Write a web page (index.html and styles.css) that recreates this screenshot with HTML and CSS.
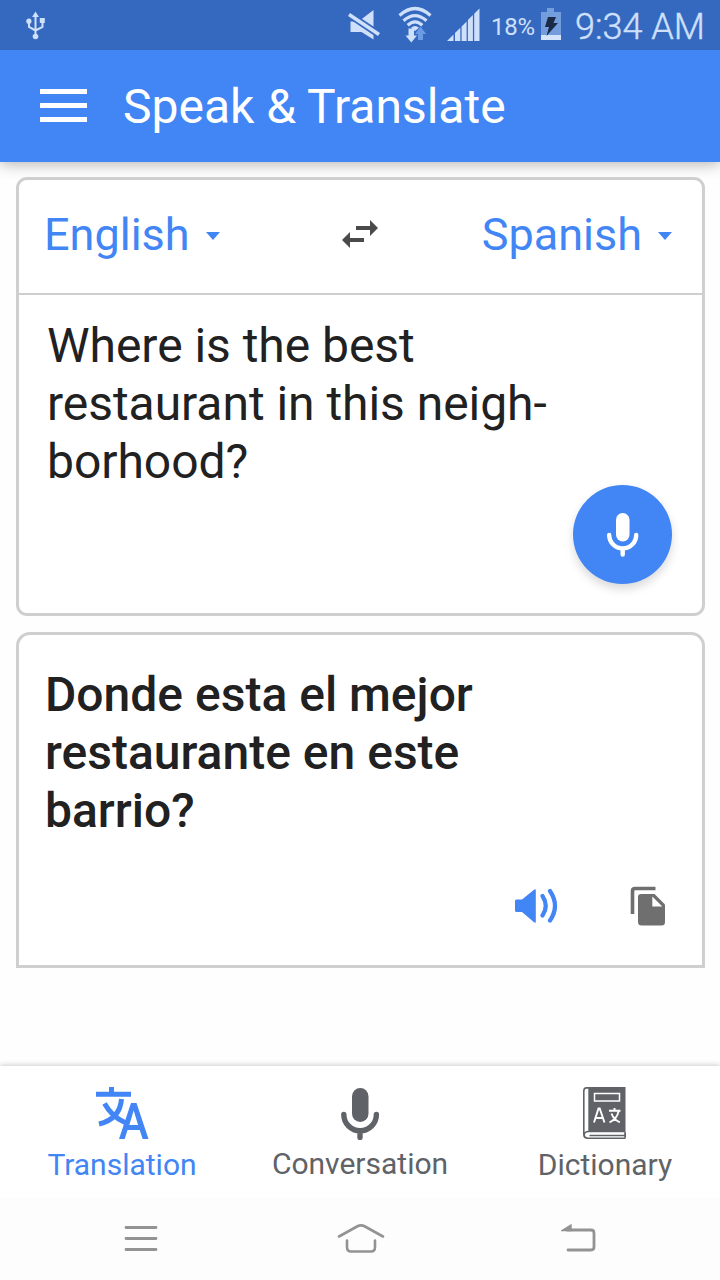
FILE: index.html
```html
<!DOCTYPE html>
<html lang="en">
<head>
  <meta charset="UTF-8" />
  <meta name="viewport" content="width=device-width, initial-scale=1.0"/>
  <title>Speak &amp; Translate</title>
  <link rel="stylesheet" href="styles.css">
</head>
<body>

  <!-- STATUS BAR -->
  <div class="status">
    <svg class="usb" width="20" height="30" viewBox="0 0 20 30" fill="none" stroke="currentColor" stroke-width="2">
      <path d="M9.500 4v21M3 11v5L9.500 19.500M16.500 10v6L9.500 19.500"/>
      <path d="M9.500 0.500l3.400 5.500h-6.800zM13.800 7h5v5h-5z" fill="currentColor" stroke="none"/>
      <circle cx="2.900" cy="10.200" r="2.600" fill="currentColor" stroke="none"/>
      <circle cx="9.500" cy="25.500" r="2.800" fill="currentColor" stroke="none"/>
    </svg>
    <svg class="mute" width="34" height="32" viewBox="0 0 34 32">
      <path d="M2.500 12.500h8L25.500 1v29.500l-12-7.500h-11z" fill="currentColor"/>
      <path d="M1 5.500l30 20" stroke="#3569c0" stroke-width="7"/>
      <path d="M1 5.500l30 20" stroke="currentColor" stroke-width="3.600"/>
    </svg>
    <svg class="wifi" width="34" height="38" viewBox="0 0 34 38" fill="none" stroke="currentColor" stroke-width="3.200">
      <path d="M1.500 9.500Q17-4.500 32.500 9.500M5.500 14.700Q17 4.500 28.500 14.700M9.700 19.200Q17 12.500 24.300 19.200"/>
      <path d="M13 21.800Q17 18 21 21.800L17 25z" fill="currentColor" stroke="none"/>
      <path d="M10.500 22.500h5.500v7h3l-5.700 7-5.800-7h3z" fill="currentColor" stroke="none"/>
      <path d="M20 34h5v-6h3.200l-5.700-7.500-5.500 7.500h3z" fill="#6c9be6" stroke="none"/>
    </svg>
    <svg class="signal" width="33" height="33" viewBox="0 0 33 33" fill="currentColor">
      <path d="M0 33l6.500-6.500V33zM8 25l5.300-5.300V33H8zM14.600 18.400l5-5V33h-5zM20.900 12.100l5-5V33h-5zM27.200 5.800L32.500 0.500V33h-5.300z"/>
    </svg>
    <span class="percent">18%</span>
    <svg class="battery" width="20" height="33" viewBox="0 0 20 33">
      <path d="M0 4h6V0h7v4h7v23H0z" fill="#749ddd"/>
      <path d="M0 27h20v5H0z" fill="#d5e4fb"/>
      <path d="M7 9h8l-2.500 6H17L5.500 28l2.500-9H4z" fill="#1b2b45"/>
    </svg>
    <span class="clock">9:34 AM</span>
  </div>

  <!-- APP BAR -->
  <header class="appbar">
    <div class="burger"><i></i><i></i><i></i></div>
    <h1>Speak &amp; Translate</h1>
  </header>

  <main>
    <!-- SOURCE TEXT -->
    <section class="card source">
      <div class="languages">
        <span class="lang">English</span>
        <i class="caret"></i>
        <svg class="swap" width="38" height="30" viewBox="0 0 38 30" fill="#4a4a4a">
          <path d="M15 6h14V0l8 8-8 8v-6H15zM23 22H9v6l-8-8 8-8v6h14z"/>
        </svg>
        <span class="lang to">Spanish</span>
        <i class="caret"></i>
      </div>
      <p class="phrase">Where is the best<br>restaurant in this neigh-<br>borhood?</p>
      <div class="speak">
        <svg width="32" height="46" viewBox="0 0 32 46">
          <rect x="9" y="1" width="13.500" height="28.500" rx="6.700" fill="#fff"/>
          <path d="M2.200 23a13.500 13.500 0 0 0 27 0M15.700 36.500v6" fill="none" stroke="#fff" stroke-width="4.400" stroke-linecap="round"/>
        </svg>
      </div>
    </section>

    <!-- TRANSLATION -->
    <section class="card result">
      <p class="phrase">Donde esta el mejor<br>restaurante en este<br>barrio?</p>
      <div class="actions">
        <svg width="44" height="36" viewBox="0 0 44 36">
          <path d="M2.500 11.500H8L20 1.700q1.800-1.200 1.800.6v31.400q0 1.800-1.800.6L8 24H2.500Q1 24 1 22.500V13q0-1.500 1.500-1.500z" fill="#4285f4"/>
          <path d="M28.500 8q6.500 10 0 19.500M36 3q10 15 0 29.500" fill="none" stroke="#4285f4" stroke-width="4.200" stroke-linecap="round"/>
        </svg>
        <svg class="copy" width="36" height="40" viewBox="0 0 36 40">
          <path d="M2.500 28V5q0-2.500 2.500-2.500h20.500" fill="none" stroke="#6f6f6f" stroke-width="3.600"/>
          <path d="M11 8h13.500L35 18.500V36q0 3.500-3.500 3.500H11.500Q8 39.500 8 36V11q0-3 3-3z" fill="#6f6f6f"/>
          <path d="M22.300 10.500v10h10z" fill="#fff"/>
        </svg>
      </div>
    </section>
  </main>

  <!-- TABS -->
  <nav class="tabs">
    <a class="tab active">
      <svg width="54" height="54" viewBox="0 0 54 54" fill="none" stroke="currentColor" stroke-width="5">
        <path d="M1 8.300h35M16.500 1v6"/>
        <path d="M26.500 13Q25 33 4 38M9.500 17.500Q17 31 30 36.500"/>
        <path d="M24 53L36 17h5.500L53.500 53h-5.800l-3-9H32.500l-2.800 9zM34.300 39h8.800L38.700 24.500z" fill="currentColor" fill-rule="evenodd" stroke="none"/>
      </svg>
      <span>Translation</span>
    </a>
    <a class="tab">
      <svg width="40" height="54" viewBox="0 0 40 54">
        <rect x="12" y="2" width="16.500" height="34" rx="8.200" fill="currentColor"/>
        <path d="M3.800 28.500a16.300 16.300 0 0 0 32.600 0M20 45v6.500" fill="none" stroke="currentColor" stroke-width="5.400" stroke-linecap="round"/>
      </svg>
      <span class="middle">Conversation</span>
    </a>
    <a class="tab last">
      <svg class="book" width="44" height="54" viewBox="0 0 44 54">
        <path d="M4.500 1H43.500v52H6Q1 53 1 48.500V5q0-4 3.500-4z" fill="currentColor"/>
        <path d="M2.600 5Q2.600 2.800 4.500 2.800H6.300V44.800q-2.200 0-3.700 1.400zM42.500 46.200H6.500Q3 46.200 3 48.800T6.500 51.500h36v-1.300H7.500v-1.400h35z" fill="#fff"/>
        <path d="M42.500 46.200h1.500v5.500h-1.500z" fill="currentColor"/>
        <path d="M12.500 7.500h25v7.500H12.500z" fill="none" stroke="#fff" stroke-width="1.500"/>
        <path d="M12 36.500l4.500-14h1.200l4.800 14M13.700 32h7M27 24.800h11.500M32.500 22v3M36.500 25.500Q35 33 27.500 36.300M29.500 27.500q2 6 8.300 8.800" fill="none" stroke="#fff" stroke-width="1.900"/>
      </svg>
      <span>Dictionary</span>
    </a>
  </nav>

  <!-- SYSTEM KEYS -->
  <div class="keys">
    <svg width="34" height="28" viewBox="0 0 34 28" stroke-width="2.800">
      <path d="M2 3.500h30M2 14.500h30M2 25.500h30"/>
    </svg>
    <svg class="home" width="48" height="32" viewBox="0 0 48 32" stroke-width="2.600">
      <path d="M2 14.500L20 4.500q4-2.200 8 0l18 10M10 18.500V25q0 4.500 4 4.500h20q4 0 4-4.500v-6.500"/>
    </svg>
    <svg class="back" width="36" height="28" viewBox="0 0 36 28" stroke-width="2.800">
      <path d="M6 6h24q3 0 3 3v14q0 3-3 3H7"/>
      <path d="M1 6.500L10 1v5.500z" fill="#939393" stroke-width="1.400"/>
    </svg>
  </div>

</body>
</html>
```
FILE: styles.css
```css
* {
  box-sizing: border-box;
}
body {
  margin: 0;
  width: 720px;
  height: 1280px;
  overflow: hidden;
  display: flex;
  flex-direction: column;
  font-family: Roboto, 'Liberation Sans', sans-serif;
  background: #fefefe;
}
svg {
  display: block;
  flex: none;
}
.status {
  height: 50px;
  flex: none;
  display: flex;
  align-items: flex-start;
  position: relative;
  z-index: 1;
  background: #3569c0;
  color: #cfe0fa;
  white-space: nowrap;
}
.usb {
  margin: 11px 0 0 26px;
}
.mute {
  margin: 9px 0 0 302px;
}
.wifi {
  margin: 6px 0 0 16px;
}
.signal {
  margin: 8px 0 0 15px;
}
.percent {
  width: 43px;
  margin: 12px 0 0 11px;
  font-size: 24px;
  line-height: 30px;
  letter-spacing: -0.3px;
}
.battery {
  margin: 8px 0 0 7px;
}
.clock {
  margin: 5px 0 0 14px;
  font-size: 36px;
  line-height: 44px;
  font-weight: 300;
  -webkit-text-stroke: 0.4px #cfe0fa;
}
.appbar {
  height: 112px;
  flex: none;
  display: flex;
  align-items: center;
  padding-left: 40px;
  background: #4285f4;
  box-shadow: 0 2px 14px rgba(0, 0, 0, 0.3);
}
.burger {
  width: 47px;
  margin-bottom: 1px;
  display: grid;
  gap: 9px;
}
.burger i {
  height: 5px;
  background: #fff;
}
h1 {
  margin: 0 0 0 36px;
  color: #fff;
  font-size: 48px;
  font-weight: 400;
  white-space: nowrap;
}
main {
  height: 904px;
  padding: 15px 15px 0 16px;
}
.card {
  border: 3px solid #cfcfcf;
  border-radius: 11px;
  background: #fff;
}
.source {
  height: 439px;
}
.languages {
  height: 115px;
  display: flex;
  align-items: center;
  padding: 0 30px 4px 25px;
  border-bottom: 2px solid #cfcfcf;
}
.lang {
  color: #4285f4;
  font-size: 45px;
}
.caret {
  margin: 3px 0 0 16px;
  border: 7px solid transparent;
  border-top: 8px solid #4285f4;
  border-bottom: 0;
}
.swap {
  margin: 0 0 0 121px;
}
.to {
  margin-left: auto;
}
.phrase {
  margin: 0;
  color: #212121;
  font-size: 48px;
  line-height: 58px;
  white-space: nowrap;
}
.source .phrase {
  padding: 22px 0 0 28px;
  letter-spacing: -0.04px;
}
.speak {
  width: 99px;
  height: 99px;
  margin: -6px 30px 0 auto;
  display: flex;
  align-items: center;
  justify-content: center;
  border-radius: 50%;
  background: #4285f4;
  box-shadow: 0 5px 10px rgba(0, 0, 0, 0.15);
}
.result {
  height: 336px;
  margin-top: 16px;
  border-radius: 14px 14px 0 0;
}
.result .phrase {
  padding: 31px 0 0 26px;
  font-weight: 500;
}
.actions {
  display: flex;
  align-items: center;
  justify-content: flex-end;
  gap: 72px;
  padding: 46px 36px 0 0;
}
.tabs {
  height: 131px;
  flex: none;
  display: grid;
  grid-template-columns: 244px 232px 1fr;
  padding-top: 20px;
  background: #fff;
  color: #5f6368;
  box-shadow: 0 -1px 5px rgba(0, 0, 0, 0.2);
}
.tab {
  display: flex;
  flex-direction: column;
  align-items: center;
  font-size: 30px;
  line-height: 36px;
}
.tab span {
  margin-top: 7px;
}
.tab .middle {
  margin-top: 6px;
}
.active {
  color: #4285f4;
}
.last {
  padding-left: 14px;
}
.book {
  margin-right: 2px;
}
.keys {
  height: 83px;
  display: flex;
  align-items: center;
  padding: 0 0 2px 124px;
  background: #fdfdfd;
}
.keys svg {
  fill: none;
  stroke: #939393;
  stroke-linecap: round;
}
.home {
  margin-left: 179px;
}
.back {
  margin-left: 176px;
}
```
